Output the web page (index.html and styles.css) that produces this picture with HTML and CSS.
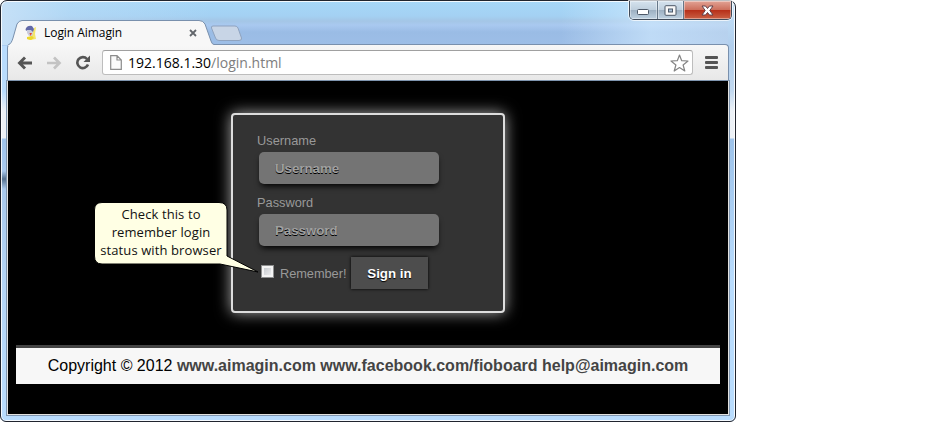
FILE: index.html
```html
<!DOCTYPE html>
<html lang="en">
<head>
<meta charset="utf-8">
<title>Login Aimagin</title>
<link rel="stylesheet" href="styles.css">
</head>
<body>
<div class="window">
  <div class="frame">
    <header class="titlebar">
      <div class="tab">
        <svg class="tab-shape" width="206" height="27" viewBox="0 0 206 27"><path d="M0 26 C3 25 4 22 5 19 L9 5 Q11 1.5 14 1.5 H191 Q195 1.5 197 5 L203 22 Q204 25.5 206 25.5 V27 H0Z" fill="#f7f7f7"/><path d="M0 26 C3 25 4 22 5 19 L9 5 Q11 1.5 14 1.5 H191 Q195 1.5 197 5 L203 22 Q204 25.5 206 25.5" fill="none" stroke="#7990ad"/></svg>
        <div class="tab-content">
          <svg class="favicon" width="14" height="16" viewBox="0 0 14 16"><path d="M10 3l2-1-1 7 1 5-6 1-3-1 4-3z" fill="#f3e56a"/><path d="M2 3Q4 0 8 1L10 4 9 7 6 5 3 6 1.500 5z" fill="#6269a8"/><path d="M3 5l4 0 2 3-1 3-3 0-2-3z" fill="#c9cbdc"/><path d="M5.500 8l2.500 0-1.500 3z" fill="#e34629"/><path d="M3 12l5-1 2 2-3 2-4-1z" fill="#ecd72b"/></svg>
          <span class="tab-title">Login Aimagin</span>
          <svg class="tab-close" width="8" height="8" viewBox="0 0 8 8"><path d="M1 1l6 6M7 1L1 7" stroke="#62666b" stroke-width="1.8"/></svg>
        </div>
      </div>
      <svg class="new-tab" width="33" height="17" viewBox="0 0 33 17"><path d="M3 1H25Q27 1 28 3L31.500 13Q32 15.500 29 15.500H9Q6.500 15.500 5.500 13L1.500 3Q1 1 3 1Z" fill="#c8d5e6" stroke="#8fa3bf"/></svg>
      <div class="controls">
        <div class="control minimize"><svg width="14" height="8" viewBox="0 0 14 8"><rect x="1.500" y="1.500" width="11" height="5" rx="1" fill="#fff" stroke="#4d5867"/></svg></div>
        <div class="control maximize"><svg width="13" height="11" viewBox="0 0 13 11"><rect x="1" y=".7" width="11" height="9.600" rx="1" fill="#f8f8f8" stroke="#4d5867"/><rect x="4.500" y="4" width="4" height="3" fill="#a9c1d8" stroke="#4d5867"/></svg></div>
        <div class="control close"><svg width="13" height="11" viewBox="0 0 13 11"><path d="M1 1h3.500l2 2.500 2-2.500H12L8.800 5.500 12 10H8.500l-2-2.500-2 2.500H1l3.200-4.500z" fill="#fff" stroke="#61414a"/></svg></div>
      </div>
    </header>
    <nav class="toolbar">
      <svg class="nav-icon" width="16" height="14" viewBox="0 0 16 14"><path d="M15 7H3M8 1.500L2.500 7 8 12.500" fill="none" stroke="#555" stroke-width="2.900"/></svg>
      <svg class="nav-icon" width="16" height="14" viewBox="0 0 16 14"><path d="M1 7h12M8 1.500L13.500 7 8 12.500" fill="none" stroke="#c3c3c3" stroke-width="2.700"/></svg>
      <svg class="nav-icon reload" width="16" height="15" viewBox="0 0 16 15"><path d="M12 4A5.500 5.500 0 1 0 13 9.500" fill="none" stroke="#555" stroke-width="2.600"/><path d="M15 .5V7H8.500z" fill="#555"/></svg>
      <div class="address">
        <svg width="12" height="15" viewBox="0 0 12 15"><path d="M.7.7H7l4.300 4.300v9.300H.7zM7 .7V5h4.300" fill="#fafafa" stroke="#8c8c8c" stroke-width="1.200"/></svg>
        <span class="url">192.168.1.30<span class="path">/login.html</span></span>
        <svg class="star" width="19" height="18" viewBox="0 0 19 18"><path d="M9.500 1L11.700 6.700 18 7 13.100 11 14.800 17 9.500 13.600 4.200 17 5.900 11 1 7 7.300 6.700z" fill="#fff" stroke="#858585" stroke-width="1.200" stroke-linejoin="round"/></svg>
      </div>
      <div class="menu"><span></span><span></span><span></span></div>
    </nav>
    <main class="page">
      <form class="login">
        <label class="label" for="user">Username</label>
        <input class="field" id="user" type="text" placeholder="Username">
        <label class="label" for="pass">Password</label>
        <input class="field" id="pass" type="password" placeholder="Password">
        <div class="actions">
          <input class="check" id="remember" type="checkbox">
          <label class="remember" for="remember">Remember!</label>
          <button class="submit" type="button">Sign in</button>
        </div>
      </form>
      <footer class="footer">Copyright © 2012 <b>www.aimagin.com www.facebook.com/fioboard help@aimagin.com</b></footer>
    </main>
  </div>
  <div class="callout">
    <svg class="callout-shape" width="168" height="74" viewBox="0 0 168 74"><path d="M8 .5H125Q133 .5 133 8V54L164 70 126 62H8Q.5 62 .5 54V8Q.5 .5 8 .5Z" fill="#ffffe4" stroke="#000"/></svg>
    <p class="callout-text">Check this to<br>remember login<br>status with browser</p>
  </div>
</div>
</body>
</html>
```

FILE: styles.css
```css
* { box-sizing: border-box; }
body { margin: 0; background: #fff; font-family: "Liberation Sans", Arial, sans-serif; overflow: hidden; }
svg { display: block; flex: none; }

.window {
  position: relative;
  width: 736px;
  height: 422px;
  border: 1px solid #20242e;
  border-radius: 7px 7px 6px 6px;
  background:
    linear-gradient(180deg, transparent 90px, #edf1f6 110px, #edf1f6 137px, #9fc4eb 138px, #a9c9ed 170px, #55718f 178px, #a9c9ec 188px, #b4d5f6 285px, #b9dcfd) left / 7px 100% no-repeat,
    linear-gradient(180deg, #c5e2fa, #b2cfed 45px, #c2d9f0 90px, #edf2f7 110px, #edf1f6 137px, #9ec3ea 138px, #b9dcfd 280px) right / 7px 100% no-repeat,
    linear-gradient(90deg, #c5e0f7 0, rgba(197,224,247,.4) 70px, transparent 210px, transparent 560px, rgba(210,235,255,.65) 650px, rgba(210,228,245,.5)) top / 100% 44px no-repeat,
    linear-gradient(180deg, #a6d7f8 0, #a4d1f3 15px, #a4c6e6 20px, #a9c9f0 24px, #9abce5 31px, #9dbee7 44px, #b9dcfd 45px);
  box-shadow: inset 0 0 0 1px rgba(255,255,255,.85);
}
.frame { display: flex; flex-direction: column; height: 100%; padding: 0 6px 6px 6px; }

.titlebar { display: flex; height: 43px; flex: none; padding-left: 1px; }
.tab { display: grid; width: 206px; margin-top: 18px; height: 27px; z-index: 1; }
.tab-shape, .tab-content { grid-area: 1 / 1; }
.tab-content { display: flex; align-items: center; height: 25px; padding: 2px 17px 0 16px; z-index: 1; }
.tab-title { margin-left: 6px; flex: 1; font: 12px "Open Sans", sans-serif; letter-spacing: -.05px; white-space: nowrap; color: #000; }
.new-tab { margin: 24px 0 0 -4px; }
.controls { display: flex; width: 103px; height: 19px; margin-left: auto; margin-right: -3px; border: 1px solid #414b59; border-top: 0; border-radius: 0 0 5px 5px; overflow: hidden; box-shadow: 0 0 0 1px rgba(255,255,255,.7); }
.control { display: flex; align-items: center; justify-content: center; width: 28px; border-right: 1px solid #667788; background: linear-gradient(#d5e3ee, #bfcfdd 48%, #9cafc1 50%, #bed1e0); box-shadow: inset 0 0 0 1px rgba(255,255,255,.4); }
.minimize svg { margin-top: 4px; }
.maximize { width: 27px; }
.close { width: 47px; border: 0; background: linear-gradient(#e2a395, #cd705d 48%, #b62e18 50%, #ca6044); }

.toolbar { display: flex; align-items: center; height: 37px; flex: none; padding: 0 9px; background: linear-gradient(#f7f7f7, #e8e8e8); border: 1px solid #7990ad; border-bottom-color: #a5a5a5; border-radius: 4px 4px 0 0; }
.nav-icon { margin-right: 13px; }
.reload { margin-right: 11px; }
.address { display: flex; align-items: center; width: 591px; height: 25px; padding: 0 3px 0 7px; background: #fff; border: 1px solid #bdbdbd; border-top-color: #a0a0a0; border-radius: 3px; }
.url { flex: 1; margin-left: 6px; font: 14px "Open Sans", sans-serif; color: #000; }
.path { color: #7e7e7e; }
.menu { display: grid; gap: 2px; width: 13px; margin-left: 12px; }
.menu span { height: 3px; border-radius: 1px; background: #555; }

.page { display: flex; flex-direction: column; flex: 1; min-height: 0; padding: 32px 8px 0; background: #000; border: 1px solid #e2e2e0; border-top: 0; box-shadow: 0 0 0 1px #7f95af; }
.login { display: flex; flex-direction: column; align-items: flex-start; width: 274px; height: 200px; flex: none; margin-left: 215px; padding: 18px 24px 0; background: #333; border: 2px solid #ddd; border-radius: 4px; box-shadow: 0 0 15px #aaa; }
.label, .remember { font-size: 12.8px; line-height: 16px; color: #999; }
.remember { width: 66px; margin-top: 1px; letter-spacing: -.05px; white-space: nowrap; }
.field { width: 180px; height: 32px; margin: 3px 2px 11px; padding: 0 16px; border: 0; border-radius: 5px; background: #747474; box-shadow: 0 4px 6px -2px #000; font: bold 13.333px "Liberation Sans", Arial, sans-serif; color: #aaa; }
.field::placeholder { color: #a0a0a0; opacity: 1; letter-spacing: -.05px; text-shadow: 0 1px 0 #000; }
.actions { display: flex; align-items: center; height: 32px; }
.check { appearance: none; width: 13px; height: 13px; margin: -4px 6px 0 4px; border: 1px solid #8e8f8f; background: linear-gradient(135deg, #bfc3c8, #f5f5f5); box-shadow: inset 0 0 0 2px #f4f4f4; }
.submit { width: 77px; height: 32px; margin-left: 5px; padding: 0; border: 0; background: #4d4d4d; box-shadow: 0 0 3px #000; font: bold 13.333px "Liberation Sans", Arial, sans-serif; color: #fff; text-shadow: 0 1px 1px #000; }
.footer { height: 39px; margin-top: 32px; flex: none; border-top: 3px solid #444; background: #f7f7f7; font-size: 16px; line-height: 35px; text-align: center; white-space: nowrap; color: #000; }
.footer b { color: #444; }

.callout { position: absolute; left: 93px; top: 201px; width: 168px; height: 74px; }
.callout-shape { position: absolute; left: 0; top: 0; }
.callout-text { position: relative; width: 134px; margin: 3px 0 0; font: 13px/18px "Open Sans", sans-serif; letter-spacing: .1px; text-align: center; white-space: nowrap; color: #111; }
```
